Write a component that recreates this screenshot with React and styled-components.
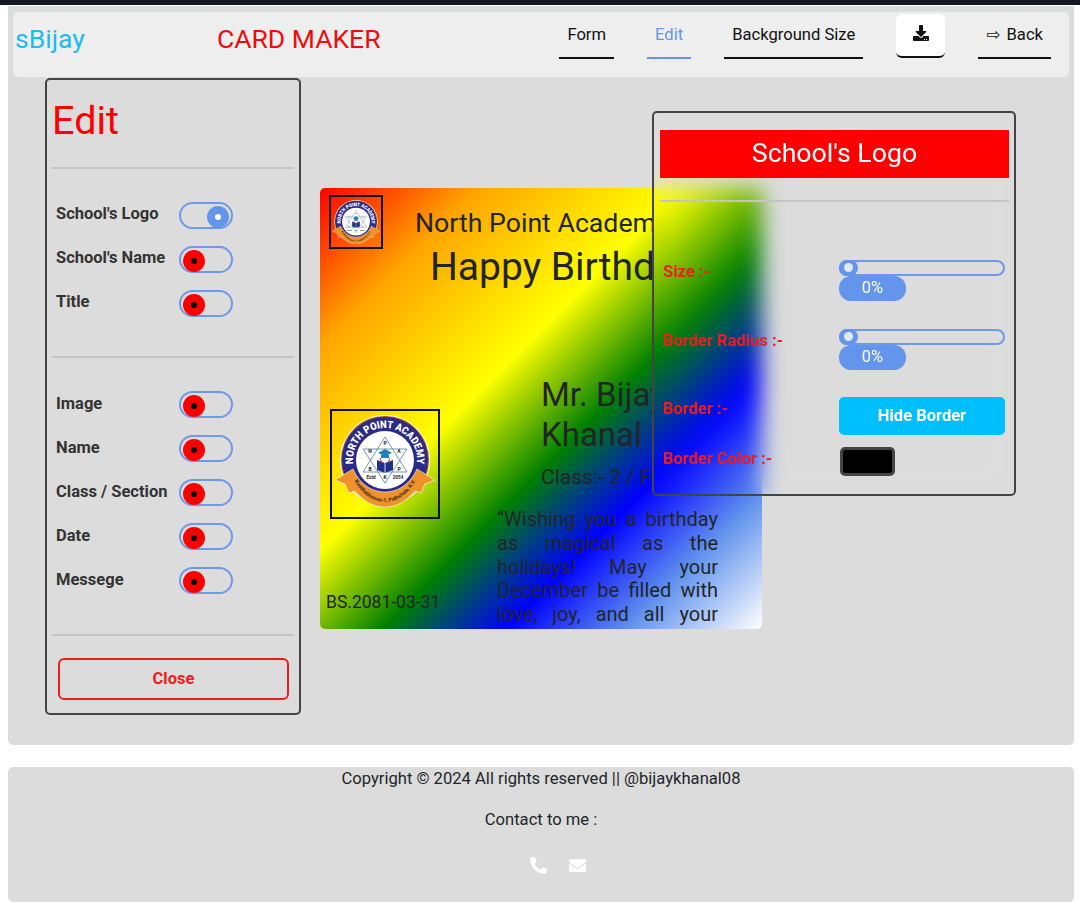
import React from 'react';
import styled, { createGlobalStyle } from 'styled-components';
import { FaDownload, FaEnvelope, FaPhoneAlt } from 'react-icons/fa';

const GlobalStyle = createGlobalStyle`
  * { box-sizing: border-box; }
  html, body { margin: 0; background: #fff; }
  body {
    font-family: Roboto, "Liberation Sans", sans-serif;
    color: #212529;
    font-size: 16.6px;
  }
`;

const TopStrip = styled.div`
  height: 5px;
  background: #16161e;
`;

const Main = styled.main`
  position: relative;
  margin: 1px 6px 0 8px;
  height: 739px;
  padding: 6px 5px 0;
  background: #dcdcdc;
  border-radius: 0 0 5px 5px;
`;

const Navbar = styled.nav`
  display: flex;
  align-items: flex-start;
  height: 65px;
  padding: 2px 18px 0 2px;
  background: #eeeeee;
  border-radius: 5px;
`;

const Brand = styled.span`
  width: 202px;
  margin-top: 9px;
  font-size: 26.5px;
  line-height: 32px;
  color: #1dbcec;
`;

const AppTitle = styled.span`
  margin-top: 9px;
  font-size: 26.5px;
  line-height: 32px;
  color: #ee0c0c;
`;

const NavLinks = styled.div`
  display: flex;
  gap: 33px;
  margin-left: auto;
`;

const NavLink = styled.a`
  display: flex;
  align-items: center;
  height: 45px;
  padding: 0 8px 3px;
  font-size: 16.6px;
  white-space: nowrap;
  color: ${(p) => (p.$active ? '#6495ed' : '#111')};
  border-bottom: 2px solid ${(p) => (p.$active ? '#6495ed' : '#111')};
`;

const DownloadButton = styled.button`
  display: flex;
  align-items: center;
  justify-content: center;
  width: 49px;
  height: 44px;
  padding: 0 0 4px;
  border: none;
  border-bottom: 2px solid #111;
  border-radius: 6px;
  background: #fff;
  color: #111;
`;

const BackArrow = styled.span`
  margin-right: 6px;
  font-family: "DejaVu Sans", sans-serif;
  font-size: 17px;
  line-height: 1;
`;

const Card = styled.section`
  display: flex;
  flex-direction: column;
  width: 442px;
  height: 441px;
  margin: 111px 0 0 307px;
  padding: 7px 44px 0 9px;
  overflow: hidden;
  border-radius: 5px;
  background: linear-gradient(135deg, red 0%, orange 18%, yellow 41%, green 57%, blue 71%, cornflowerblue 85%, white 100%);
`;

const CardHeader = styled.header`
  flex: none;
  display: flex;
  height: 214px;
`;

const LogoFrame = styled.div`
  flex: none;
  display: flex;
  align-items: center;
  justify-content: center;
  width: ${(p) => p.$size}px;
  height: ${(p) => p.$size}px;
  padding-bottom: ${(p) => p.$lift || 0}px;
  border: 2px solid #111;
`;

const PhotoFrame = styled(LogoFrame)`
  margin-left: 1px;
`;

// text stops where the blurred settings panel starts
const Headings = styled.div`
  flex: none;
  width: 239px;
  height: 100px;
  margin-left: 32px;
  overflow: hidden;
  white-space: nowrap;
`;

const SchoolName = styled.div`
  margin-top: 13px;
  font-size: 26.7px;
  line-height: 30px;
`;

const Greeting = styled.div`
  margin: 6px 0 0 15px;
  font-size: 39px;
  line-height: 46px;
`;

const CardBody = styled.div`
  display: flex;
  flex: 1;
`;

const LeftColumn = styled.div`
  flex: none;
  display: flex;
  flex-direction: column;
  width: 168px;
`;

const DateText = styled.div`
  margin: 73px 0 0 -3px;
  font-size: 17.5px;
  line-height: 20px;
  white-space: nowrap;
`;

const RightColumn = styled.div`
  flex: 1;
  min-width: 0;
`;

const Person = styled.div`
  width: 113px;
  margin: -34px 0 0 44px;
  overflow: hidden;
  font-size: 33px;
  line-height: 40px;
  white-space: nowrap;
`;

const ClassLine = styled.div`
  width: 113px;
  margin: 9px 0 0 44px;
  overflow: hidden;
  font-size: 21px;
  line-height: 26px;
  white-space: nowrap;
`;

const Message = styled.p`
  margin: 18px 0 0;
  max-height: 119px;
  overflow: hidden;
  font-size: 20px;
  line-height: 23.8px;
  text-align: justify;
`;

const Panel = styled.aside`
  position: absolute;
  border: 2px solid #444;
  border-radius: 5px;
`;

const EditPanel = styled(Panel)`
  left: 37px;
  top: 72px;
  width: 256px;
  height: 637px;
  padding: 0 5px;
`;

const EditTitle = styled.h2`
  margin: 0;
  padding: 17px 0 0;
  height: 87px;
  font-size: 39.6px;
  line-height: 47px;
  font-weight: 400;
  color: #f00;
`;

const Divider = styled.hr`
  height: 2px;
  margin: 0;
  border: none;
  background: #c4c4c4;
`;

const ToggleList = styled.div`
  display: flex;
  flex-direction: column;
  gap: 17px;
  height: ${(p) => p.$height}px;
  padding: ${(p) => p.$top}px 0 0 4px;
`;

const ToggleRow = styled.label`
  display: flex;
  align-items: flex-start;
  height: 27px;
`;

const ToggleLabel = styled.span`
  width: 123px;
  font-size: 16.5px;
  line-height: ${(p) => p.$line}px;
  font-weight: 700;
  color: #333;
  white-space: nowrap;
`;

const Switch = styled.span`
  position: relative;
  display: block;
  width: 54px;
  height: 27px;
  border: 2px solid #6f98e8;
  border-radius: 14px;
`;

const Thumb = styled.span`
  position: absolute;
  top: 1.5px;
  left: ${(p) => (p.$on ? '26px' : '2px')};
  width: 22px;
  height: 22px;
  border-radius: 50%;
  background: ${(p) => (p.$on ? '#6495ed' : '#f00')};
  &::after {
    content: '';
    position: absolute;
    left: 8px;
    top: 8px;
    width: 6px;
    height: 6px;
    border-radius: 50%;
    background: ${(p) => (p.$on ? '#fff' : '#000')};
  }
`;

const CloseButton = styled.button`
  display: block;
  width: 231px;
  height: 42px;
  margin: 22px 0 0 6px;
  padding: 0 0 2px;
  border: 2px solid #ee1c1c;
  border-radius: 6px;
  background: transparent;
  color: #ee1c1c;
  font: 700 16.5px Roboto, sans-serif;
`;

const LogoPanel = styled(Panel)`
  left: 644px;
  top: 105px;
  width: 364px;
  height: 385px;
  padding: 17px 5px 0 6px;
  backdrop-filter: blur(11px);
`;

const PanelHeader = styled.h3`
  margin: 0;
  height: 48px;
  background: #f00;
  color: #fff;
  font-size: 26.7px;
  line-height: 47px;
  font-weight: 400;
  text-align: center;
`;

const PanelDivider = styled(Divider)`
  margin-top: 22px;
`;

const SettingRow = styled.div`
  display: grid;
  grid-template-columns: 176px 166px;
  height: ${(p) => p.$height}px;
  padding-left: 3px;
  margin-top: ${(p) => p.$top || 0}px;
`;

const SettingLabel = styled.span`
  font-size: 16.5px;
  line-height: 24px;
  font-weight: 700;
  color: #ee1c1c;
  white-space: nowrap;
`;

const SliderTrack = styled.div`
  position: relative;
  height: 16px;
  border: 2px solid #6f98e8;
  border-radius: 8px;
`;

const SliderThumb = styled.span`
  position: absolute;
  left: -2px;
  top: -2px;
  width: 19px;
  height: 16px;
  border-radius: 8px;
  background: #6495ed;
  &::after {
    content: '';
    position: absolute;
    left: 5px;
    top: 3px;
    width: 9px;
    height: 9px;
    border-radius: 50%;
    background: #e4e8f2;
  }
`;

const SliderValue = styled.output`
  display: block;
  width: 67px;
  height: 25px;
  border-radius: 12px;
  background: #6495ed;
  color: #fff;
  font-size: 16.5px;
  line-height: 24px;
  text-align: center;
`;

const HideButton = styled.button`
  width: 166px;
  height: 38px;
  padding: 0 0 2px;
  border: none;
  border-radius: 5px;
  background: #00bfff;
  color: #fff;
  font: 700 16.5px Roboto, sans-serif;
`;

const ColorSwatch = styled.div`
  width: 55px;
  height: 29px;
  margin-left: 1px;
  border: 3px solid #444;
  border-radius: 5px;
  background: #000;
`;

const Footer = styled.footer`
  margin: 22px 6px 9px 8px;
  height: 135px;
  padding-top: 2px;
  background: #dcdcdc;
  border-radius: 5px;
  text-align: center;
`;

const FooterLine = styled.p`
  margin: 0 0 22px;
  font-size: 16.6px;
  line-height: 19px;
`;

const FooterIcons = styled.div`
  display: flex;
  justify-content: center;
  align-items: center;
  gap: 22px;
  margin: 28px 0 0 34px;
  color: #fff;
`;

function SchoolLogo({ size, name }) {
  return (
    <svg width={size} height={size * 0.92} viewBox="0 -2 100 92">
      <circle cx="50" cy="43" r="45" fill="#fff" />
      <circle cx="50" cy="43" r="44" fill="#a0522d" />
      <circle cx="50" cy="43" r="43" fill="#2b2a86" />
      <circle cx="50" cy="43" r="29" fill="#fff" />
      <path id={`${name}-arc`} d="M21 56.5 A32 32 0 1 1 79 56.5" fill="none" />
      <text fontFamily="Roboto, sans-serif" fontWeight="900" fontSize="10.5" fill="#fff">
        <textPath href={`#${name}-arc`} startOffset="50%" textAnchor="middle" textLength="108" lengthAdjust="spacingAndGlyphs">NORTH POINT ACADEMY</textPath>
      </text>
      <path d="M50 20 L72 55 H28 Z M50 66 L28 32 H72 Z" fill="none" stroke="#3f6c90" strokeWidth="0.7" />
      <path d="M42 43 L50 46 L58 43 V53 L50 56 L42 53 Z" fill="#1f2f8a" />
      <path d="M50 46 V56" stroke="#fff" strokeWidth="0.8" />
      <path d="M43 36 L50 32 L57 36 L50 39 Z M46 38 H54 V41 H46 Z" fill="#1d7fb8" />
      <path d="M45 41 L47 46 M55 41 L53 46" stroke="#d13a3a" strokeWidth="1" />
      <g fontFamily="Roboto, sans-serif" fontSize="5" fontWeight="700" fill="#1c1c1c" textAnchor="middle">
        <text x="50" y="28">P</text>
        <text x="35" y="36">N</text>
        <text x="64" y="36">A</text>
        <text x="35" y="54">B</text>
        <text x="64" y="54">P</text>
        <text x="50" y="62">K</text>
        <text x="36" y="62" fontSize="4.6">Estd</text>
        <text x="63" y="62" fontSize="4.6">2054</text>
      </g>
      <path
        d="M0 63 L18 52 C26 70 40 75 50 75 C60 75 74 70 82 52 L100 63 L90 67 L86 76 L80 74 C70 86 60 90 50 90 C40 90 30 86 20 74 L14 76 L10 67 Z"
        fill="#f0922b"
        stroke="#fff"
        strokeWidth="0.6"
      />
      <path id={`${name}-ribbon`} d="M19 63 C28 79 40 85 50 85 C60 85 72 79 81 63" fill="none" />
      <text fontFamily="Roboto, sans-serif" fontWeight="700" fontSize="5.2" fill="#3a2a10">
        <textPath href={`#${name}-ribbon`} startOffset="50%" textAnchor="middle">Buddhabhoomi-1, Pathshala, K.V.</textPath>
      </text>
    </svg>
  );
}

const firstToggles = [
  { label: "School's Logo", on: true },
  { label: "School's Name" },
  { label: 'Title' },
];
const secondToggles = [
  { label: 'Image' },
  { label: 'Name' },
  { label: 'Class / Section' },
  { label: 'Date' },
  { label: 'Messege' },
];

function Toggles({ items, height, top, line }) {
  return (
    <ToggleList $height={height} $top={top}>
      {items.map((t) => (
        <ToggleRow key={t.label}>
          <ToggleLabel $line={line}>{t.label}</ToggleLabel>
          <Switch><Thumb $on={t.on} /></Switch>
        </ToggleRow>
      ))}
    </ToggleList>
  );
}

export default function App() {
  return (
    <>
      <GlobalStyle />
      <TopStrip />
      <Main>
        <Navbar>
          <Brand>sBijay</Brand>
          <AppTitle>CARD MAKER</AppTitle>
          <NavLinks>
            <NavLink>Form</NavLink>
            <NavLink $active>Edit</NavLink>
            <NavLink>Background Size</NavLink>
            <DownloadButton aria-label="Download"><FaDownload size={16} /></DownloadButton>
            <NavLink><BackArrow>⇨</BackArrow>Back</NavLink>
          </NavLinks>
        </Navbar>

        <Card>
          <CardHeader>
            <LogoFrame $size={54}><SchoolLogo size={48} name="small" /></LogoFrame>
            <Headings>
              <SchoolName>North Point Academy</SchoolName>
              <Greeting>Happy Birthday</Greeting>
            </Headings>
          </CardHeader>
          <CardBody>
            <LeftColumn>
              <PhotoFrame $size={110} $lift={6}><SchoolLogo size={100} name="large" /></PhotoFrame>
              <DateText>BS.2081-03-31</DateText>
            </LeftColumn>
            <RightColumn>
              <Person>Mr. Bijay<br />Khanal</Person>
              <ClassLine>Class:- 2 / F</ClassLine>
              <Message>
                “Wishing you a birthday as magical as the holidays! May your December be filled with
                love, joy, and all your favorite things this season and always.
              </Message>
            </RightColumn>
          </CardBody>
        </Card>

        <EditPanel>
          <EditTitle>Edit</EditTitle>
          <Divider />
          <Toggles items={firstToggles} height={187} top={33} line={24} />
          <Divider />
          <Toggles items={secondToggles} height={276} top={33} line={26} />
          <Divider />
          <CloseButton>Close</CloseButton>
        </EditPanel>

        <LogoPanel>
          <PanelHeader>School's Logo</PanelHeader>
          <PanelDivider />
          <SettingRow $height={69} $top={58}>
            <SettingLabel>Size :-</SettingLabel>
            <div>
              <SliderTrack><SliderThumb /></SliderTrack>
              <SliderValue>0%</SliderValue>
            </div>
          </SettingRow>
          <SettingRow $height={68}>
            <SettingLabel>Border Radius :-</SettingLabel>
            <div>
              <SliderTrack><SliderThumb /></SliderTrack>
              <SliderValue>0%</SliderValue>
            </div>
          </SettingRow>
          <SettingRow $height={50}>
            <SettingLabel>Border :-</SettingLabel>
            <HideButton>Hide Border</HideButton>
          </SettingRow>
          <SettingRow $height={30}>
            <SettingLabel>Border Color :-</SettingLabel>
            <ColorSwatch />
          </SettingRow>
        </LogoPanel>
      </Main>
      <Footer>
        <FooterLine>Copyright © 2024 All rights reserved || @bijaykhanal08</FooterLine>
        <FooterLine>Contact to me :</FooterLine>
        <FooterIcons>
          <FaPhoneAlt size={17} />
          <FaEnvelope size={17} />
        </FooterIcons>
      </Footer>
    </>
  );
}
